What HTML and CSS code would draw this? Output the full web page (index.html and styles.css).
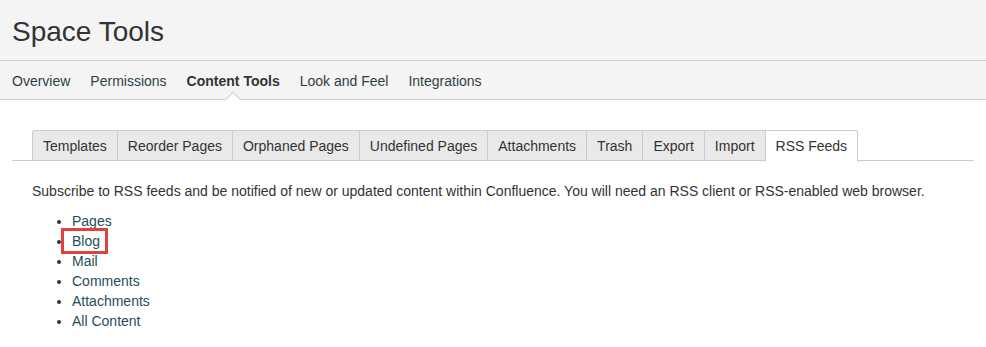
FILE: index.html
```html
<!DOCTYPE html>
<html>
<head>
<meta charset="utf-8">
<link rel="stylesheet" href="styles.css">
</head>
<body>
<header class="header">
  <h1 class="title">Space Tools</h1>
  <nav class="nav">
    <a class="nav-item">Overview</a>
    <a class="nav-item">Permissions</a>
    <a class="nav-item active">Content Tools</a>
    <a class="nav-item">Look and Feel</a>
    <a class="nav-item">Integrations</a>
  </nav>
</header>
<main class="main">
  <div class="tabs">
    <a class="tab">Templates</a>
    <a class="tab">Reorder Pages</a>
    <a class="tab">Orphaned Pages</a>
    <a class="tab">Undefined Pages</a>
    <a class="tab">Attachments</a>
    <a class="tab">Trash</a>
    <a class="tab">Export</a>
    <a class="tab">Import</a>
    <a class="tab selected">RSS Feeds</a>
  </div>
  <div class="content">
    <p class="intro">Subscribe to RSS feeds and be notified of new or updated content within Confluence. You will need an RSS client or RSS-enabled web browser.</p>
    <ul class="feeds">
      <li><a>Pages</a></li>
      <li><a class="highlight">Blog</a></li>
      <li><a>Mail</a></li>
      <li><a>Comments</a></li>
      <li><a>Attachments</a></li>
      <li><a>All Content</a></li>
    </ul>
  </div>
</main>
</body>
</html>
```

FILE: styles.css
```css
* { box-sizing: border-box; }
html, body { margin: 0; padding: 0; background: #fff; }
body {
  font-family: "Liberation Sans", Arial, sans-serif;
  font-size: 14px;
  color: #333;
}
.header {
  background: #f4f4f4;
  border-bottom: 1px solid #ccc;
}
.title {
  margin: 0;
  padding: 16px 12px 0;
  height: 61px;
  font-size: 28px;
  font-weight: normal;
  line-height: 32px;
  color: #333;
  border-bottom: 1px solid #ccc;
}
.nav {
  display: flex;
  gap: 20px;
  padding: 0 12px;
  height: 38px;
  align-items: center;
}
.nav-item {
  color: #2e3f47;
  position: relative;
  line-height: 20px;
  top: 1px;
}
.nav-item.active {
  font-weight: bold;
  color: #333;
}
.nav-item.active::after {
  content: "";
  position: absolute;
  left: 50%;
  bottom: -15px;
  width: 11px;
  height: 11px;
  background: #fff;
  border-left: 1px solid #ccc;
  border-top: 1px solid #ccc;
  transform: translateX(-50%) rotate(45deg);
}
.main {
  padding: 30px 12px 0;
}
.tabs {
  display: flex;
  padding-left: 20px;
  border-bottom: 1px solid #ccc;
  height: 31px;
}
.tab {
  display: block;
  height: 31px;
  line-height: 30px;
  padding: 0 10px;
  background: #e9e9e9;
  border: 1px solid #ccc;
  border-right: none;
  color: #333;
}
.tab:first-child { border-top-left-radius: 3px; }
.tab.selected {
  background: #fff;
  border-right: 1px solid #ccc;
  border-bottom: 1px solid #fff;
  height: 32px;
  border-top-right-radius: 3px;
}
.content {
  padding: 20px 20px 0;
}
.intro {
  margin: 0;
  line-height: 20px;
}
.feeds {
  margin: 10px 0 0;
  padding-left: 40px;
  line-height: 20px;
}
.feeds a {
  color: #254e5a;
}
.highlight {
  display: inline-block;
  line-height: 20px;
  outline: 3px solid #e0413c;
  padding: 0 5px 0 8px;
  margin-left: -8px;
}
```
